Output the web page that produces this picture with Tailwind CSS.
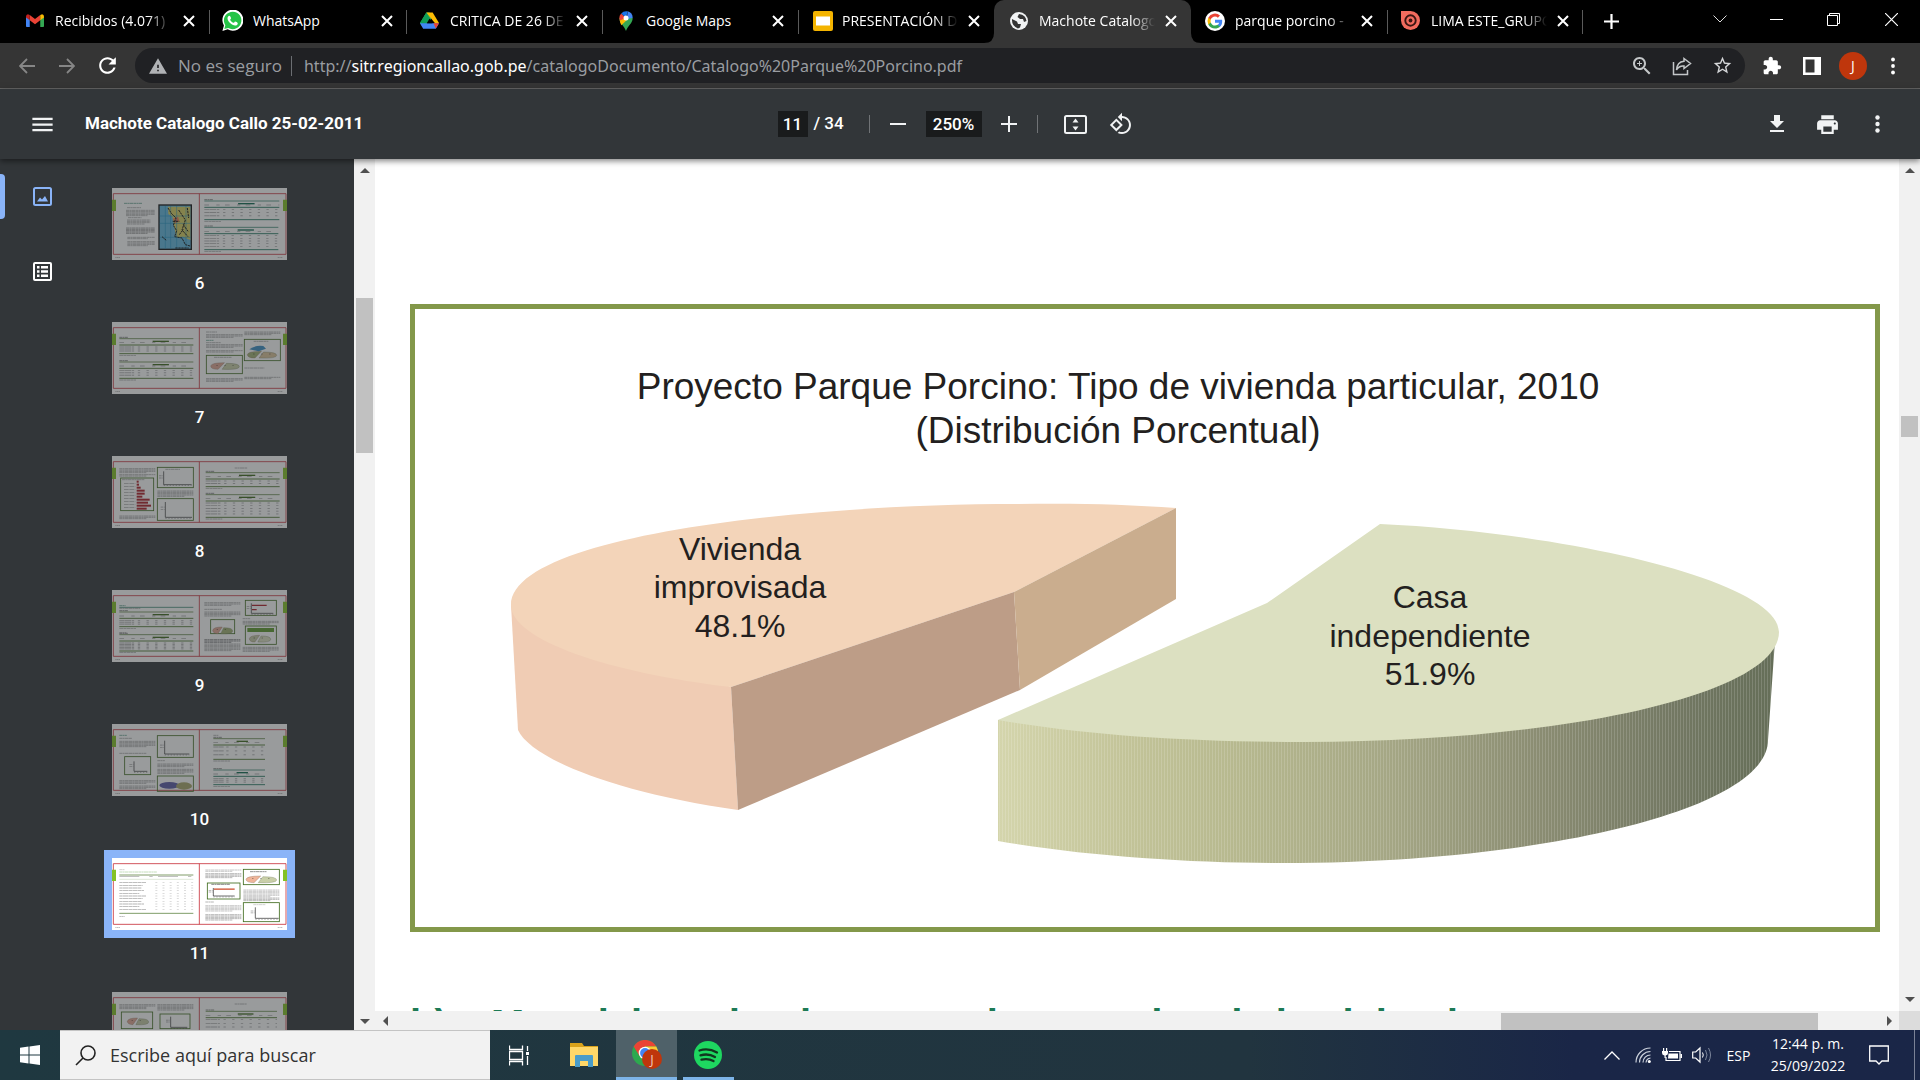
<!DOCTYPE html>
<html lang="es">
<head>
<meta charset="utf-8">
<title>Machote Catalogo Callo 25-02-2011</title>
<script src="https://cdn.jsdelivr.net/npm/@tailwindcss/browser@4"></script>
</head>
<body class="flex h-screen flex-col overflow-hidden bg-black font-['Open_Sans','Noto_Sans',sans-serif] text-white">

<!-- Tab strip -->
<header class="flex h-[43px] shrink-0 items-stretch bg-black text-[14px]">
  <nav class="flex pl-[14px]" aria-label="Pestañas">
    <div class="flex w-[196px] items-center border-r border-transparent pb-[2px] pl-3">
      <svg class="size-[18px] shrink-0" viewBox="0 0 24 24"><path fill="#4285f4" d="M1 20h4V10L0 6v12.500Q0 20 1 20z"/><path fill="#34a853" d="M19 20h4q1-.2 1-1.500V6l-5 4z"/><path fill="#ea4335" d="M5 11V4l7 5.300L19 4v7l-7 5.300z"/><path fill="#c5221f" d="M0 6q0-2.500 2.500-3L5 4v7L0 7.300z"/><path fill="#fbbc04" d="M24 6q0-2.500-2.500-3L19 4v7l5-3.700z"/></svg>
      <a href="#" class="ml-[11px] w-[116px] overflow-hidden whitespace-nowrap [mask-image:linear-gradient(to_right,black_80%,transparent)]">Recibidos (4.071)</a>
      <button class="ml-[12px]" aria-label="Cerrar"><svg class="size-3" viewBox="0 0 12 12"><path d="M1 1l10 10M11 1L1 11" stroke="#fff" stroke-width="2"/></svg></button>
    </div>
    <div class="relative flex w-[196px] items-center pb-[2px] pl-3">
      <span class="absolute left-[-1px] top-[10px] h-6 w-px bg-[#5a5a5a]"></span>
      <svg class="size-[21px] shrink-0" viewBox="0 0 24 24"><path fill="#fff" d="M.5 24l1.700-6.200A12 12 0 1 1 6.500 22z"/><path fill="#25c447" d="M2.600 21.700l1.200-4.300a10 10 0 1 1 3.400 3.200z"/><path fill="#fff" d="M8.200 6.500c-.5 0-1.900 1-1.900 3 0 3.500 5 8.300 8.700 8.300 1.700 0 3-1.200 3-2.800 0-.6-2.600-2-3.100-1.800-.5.300-1 1.500-1.500 1.500-1 0-3.900-2.600-4-3.700 0-.6 1-1 1-1.600S9.300 6.500 8.200 6.500z"/></svg>
      <a href="#" class="ml-[10px] w-[116px] overflow-hidden whitespace-nowrap">WhatsApp</a>
      <button class="ml-[12px]" aria-label="Cerrar"><svg class="size-3" viewBox="0 0 12 12"><path d="M1 1l10 10M11 1L1 11" stroke="#fff" stroke-width="2"/></svg></button>
    </div>
    <div class="relative flex w-[196px] items-center pb-[2px] pl-[14px]">
      <span class="absolute left-0 top-[10px] h-6 w-px bg-[#5a5a5a]"></span>
      <svg class="size-[19px] shrink-0" viewBox="0 0 24 24"><path fill="#34a853" d="M8 2h4L15.500 8 4.500 21.500 0 15z"/><path fill="#fbbc04" d="M8 2h8l8 13-4.500 1-7.500-9z"/><path fill="#0f9d58" d="M8 2l4 7-7.500 12.500L0 15z"/><path fill="#4285f4" d="M0 15.500h24L20 22.500H4z"/><path fill="#ea4335" d="M17 15.500h7L20 22z"/><path fill="#000" d="M12 9.500l3.500 6h-7z"/></svg>
      <a href="#" class="ml-[11px] w-[116px] overflow-hidden whitespace-nowrap [mask-image:linear-gradient(to_right,black_80%,transparent)]">CRITICA DE 26 DE</a>
      <button class="ml-[10px]" aria-label="Cerrar"><svg class="size-3" viewBox="0 0 12 12"><path d="M1 1l10 10M11 1L1 11" stroke="#fff" stroke-width="2"/></svg></button>
    </div>
    <div class="relative flex w-[196px] items-center pb-[2px] pl-[14px]">
      <span class="absolute left-0 top-[10px] h-6 w-px bg-[#5a5a5a]"></span>
      <svg class="size-[20px] shrink-0" viewBox="0 0 24 24"><path fill="#34a853" d="M12 24C10 18 4 15 4 8.500h16C20 15 14 18 12 24z"/><path fill="#fbbc04" d="M4.500 11.500L10 6l4 4-7.500 7q-1.500-2-2-5.500z"/><path fill="#ea4335" d="M4 8.500Q4 5 6.300 3L12 8.500l-7.500 3z"/><path fill="#1a73e8" d="M6.300 3Q9-.5 14 .4L12 8.500z"/><path fill="#4285f4" d="M14 .4Q20 2 20 8.500l-7 1z"/><circle cx="12" cy="8.300" r="3" fill="#fff"/></svg>
      <a href="#" class="ml-[10px] w-[116px] overflow-hidden whitespace-nowrap">Google Maps</a>
      <button class="ml-[10px]" aria-label="Cerrar"><svg class="size-3" viewBox="0 0 12 12"><path d="M1 1l10 10M11 1L1 11" stroke="#fff" stroke-width="2"/></svg></button>
    </div>
    <div class="relative flex w-[196px] items-center pb-[2px] pl-[15px]">
      <span class="absolute left-0 top-[10px] h-6 w-px bg-[#5a5a5a]"></span>
      <svg class="size-[20px] shrink-0" viewBox="0 0 20 20"><rect width="20" height="20" rx="2" fill="#f4b400"/><rect x="3" y="5.500" width="14" height="9" fill="#fff"/></svg>
      <a href="#" class="ml-[9px] w-[116px] overflow-hidden whitespace-nowrap [mask-image:linear-gradient(to_right,black_80%,transparent)]">PRESENTACIÓN DE</a>
      <button class="ml-[10px]" aria-label="Cerrar"><svg class="size-3" viewBox="0 0 12 12"><path d="M1 1l10 10M11 1L1 11" stroke="#fff" stroke-width="2"/></svg></button>
    </div>
    <div class="relative flex w-[197px] items-center rounded-t-[10px] bg-[#353535] pb-[2px] pl-4">
      <svg class="absolute bottom-0 left-[-10px] size-[10px]" viewBox="0 0 10 10"><path fill="#353535" d="M10 0v10H0Q10 10 10 0z"/></svg>
      <svg class="absolute bottom-0 right-[-10px] size-[10px]" viewBox="0 0 10 10"><path fill="#353535" d="M0 0v10h10Q0 10 0 0z"/></svg>
      <svg class="size-[18px] shrink-0" viewBox="0 0 18 18"><circle cx="9" cy="9" r="9" fill="#f1f3f4"/><path d="M2 7l5 2.500 1 2.500 3 0-1 3.500-2 1Q1.500 14 2 7zM9 2l-1.500 3 2.500 2h3l1 3 2.500-1Q16 3 9 2z" fill="#353535"/></svg>
      <a href="#" class="ml-[11px] w-[116px] overflow-hidden whitespace-nowrap [mask-image:linear-gradient(to_right,black_80%,transparent)]">Machote Catalogo</a>
      <button class="ml-[10px]" aria-label="Cerrar"><svg class="size-3" viewBox="0 0 12 12"><path d="M1 1l10 10M11 1L1 11" stroke="#fff" stroke-width="2"/></svg></button>
    </div>
    <div class="flex w-[196px] items-center pb-[2px] pl-[14px]">
      <svg class="size-[20px] shrink-0" viewBox="0 0 24 24"><circle cx="12" cy="12" r="12" fill="#fff"/><g transform="translate(3 3) scale(.75)"><path fill="#4285f4" d="M23.500 12.300c0-.9-.1-1.500-.2-2.300H12v4.600h6.600c-.3 1.500-1.200 2.800-2.500 3.700v3h3.900c2.300-2.100 3.500-5.200 3.500-9z"/><path fill="#34a853" d="M12 24c3.200 0 6-1.100 8-2.900l-3.900-3c-1.100.7-2.500 1.200-4.100 1.200-3.100 0-5.800-2.100-6.700-5H1.300v3.100C3.300 21.300 7.300 24 12 24z"/><path fill="#fbbc05" d="M5.300 14.300a7 7 0 0 1 0-4.600V6.600h-4a12 12 0 0 0 0 10.800z"/><path fill="#ea4335" d="M12 4.800c1.800 0 3.300.6 4.600 1.800L20 3.200A12 12 0 0 0 1.300 6.600l4 3.100c.9-2.800 3.600-4.900 6.700-4.900z"/></g></svg>
      <a href="#" class="ml-[10px] w-[116px] overflow-hidden whitespace-nowrap [mask-image:linear-gradient(to_right,black_80%,transparent)]">parque porcino -</a>
      <button class="ml-[10px]" aria-label="Cerrar"><svg class="size-3" viewBox="0 0 12 12"><path d="M1 1l10 10M11 1L1 11" stroke="#fff" stroke-width="2"/></svg></button>
    </div>
    <div class="relative flex w-[197px] items-center border-r border-transparent pb-[2px] pl-[14px]">
      <span class="absolute left-0 top-[10px] h-6 w-px bg-[#5a5a5a]"></span>
      <span class="absolute right-0 top-[10px] h-6 w-px bg-[#5a5a5a]"></span>
      <svg class="size-[19px] shrink-0" viewBox="0 0 20 20"><path fill="#f26b5e" d="M0 0h10a10 10 0 1 1-10 10z"/><circle cx="10" cy="10" r="5.500" fill="none" stroke="#3a1512" stroke-width="2"/><circle cx="10" cy="10" r="2" fill="#3a1512"/></svg>
      <a href="#" class="ml-[11px] w-[116px] overflow-hidden whitespace-nowrap [mask-image:linear-gradient(to_right,black_80%,transparent)]">LIMA ESTE_GRUPO</a>
      <button class="ml-[10px]" aria-label="Cerrar"><svg class="size-3" viewBox="0 0 12 12"><path d="M1 1l10 10M11 1L1 11" stroke="#fff" stroke-width="2"/></svg></button>
    </div>
  </nav>
  <button class="grid w-[54px] place-items-center" aria-label="Nueva pestaña"><svg class="size-[15px]" viewBox="0 0 15 15"><path d="M7.500 0v15M0 7.500h15" stroke="#fff" stroke-width="2.200"/></svg></button>
  <div class="ml-auto flex h-[38px] items-stretch">
    <button class="grid w-[57px] place-items-center" aria-label="Buscar pestañas"><svg class="h-2 w-[14px]" viewBox="0 0 14 8"><path d="M.5.5L7 7l6.500-6.500" fill="none" stroke="#ddd"/></svg></button>
    <button class="grid w-[57px] place-items-center" aria-label="Minimizar"><svg class="h-px w-[13px]" viewBox="0 0 13 1"><path fill="#fff" d="M0 0h13v1H0z"/></svg></button>
    <button class="grid w-[57px] place-items-center" aria-label="Restaurar"><svg class="size-[13px]" viewBox="0 0 13 13"><path d="M.5 2.500h10v10h-10zM2.500 2.500v-2h10v10h-2" fill="none" stroke="#fff"/></svg></button>
    <button class="grid w-[58px] place-items-center" aria-label="Cerrar ventana"><svg class="size-[13px]" viewBox="0 0 13 13"><path d="M0 0l13 13M13 0L0 13" stroke="#fff" stroke-width="1.200"/></svg></button>
  </div>
</header>

<!-- Address bar -->
<div class="flex h-[46px] shrink-0 items-center border-b border-[#666] bg-[#353535] pl-[7px] pr-2">
  <button class="grid w-10 place-items-center" aria-label="Atrás"><svg class="size-4" viewBox="0 0 16 16"><path d="M16 8H1.500M8 1L1 8l7 7" fill="none" stroke="#868686" stroke-width="1.800"/></svg></button>
  <button class="grid w-10 place-items-center" aria-label="Adelante"><svg class="size-4" viewBox="0 0 16 16"><path d="M0 8h14.500M8 1l7 7-7 7" fill="none" stroke="#868686" stroke-width="1.800"/></svg></button>
  <button class="grid w-10 place-items-center" aria-label="Recargar"><svg class="size-[25px]" viewBox="0 0 24 24"><path fill="#fff" d="M17.650 6.350C16.200 4.900 14.210 4 12 4c-4.420 0-7.990 3.580-7.990 8s3.570 8 7.990 8c3.730 0 6.840-2.550 7.730-6h-2.080c-.82 2.330-3.040 4-5.650 4-3.310 0-6-2.690-6-6s2.690-6 6-6c1.660 0 3.140.69 4.220 1.780L13 11h7V4l-2.350 2.350z"/></svg></button>
  <div class="ml-2 flex h-[35px] flex-1 items-center rounded-full bg-[#202124] pl-[14px] pr-[3px] text-[17px] text-[#9a9da1]">
    <svg class="size-[18px] shrink-0" viewBox="1 1 22 21"><path fill="#b0b2b5" d="M1 21h22L12 2 1 21zm12-3h-2v-2h2v2zm0-4h-2v-4h2v4z"/></svg>
    <span class="ml-[11px] whitespace-nowrap">No es seguro</span>
    <span class="ml-[9px] h-5 w-px bg-[#6b6e72]"></span>
    <div role="textbox" aria-label="Dirección" tabindex="0" class="ml-3 flex-1 whitespace-nowrap font-['Noto_Sans',sans-serif] text-[16px]">http://<span class="text-white">sitr.regioncallao.gob.pe</span>/catalogoDocumento/Catalogo%20Parque%20Porcino.pdf</div>
    <button class="grid w-10 place-items-center" aria-label="Zoom"><svg class="size-[24px]" viewBox="0 0 24 24"><path fill="#c4c7c9" d="M15.500 14h-.79l-.28-.27C15.410 12.590 16 11.110 16 9.500 16 5.910 13.090 3 9.500 3S3 5.910 3 9.500 5.910 16 9.500 16c1.610 0 3.090-.59 4.230-1.570l.27.28v.79l5 4.990L20.490 19l-4.990-5zm-6 0C7.010 14 5 11.990 5 9.500S7.010 5 9.500 5 14 7.010 14 9.500 11.990 14 9.500 14zm2.500-4h-2v2H9v-2H7V9h2V7h1v2h2v1z"/></svg></button>
    <button class="grid w-10 place-items-center" aria-label="Compartir"><svg class="size-[20px]" viewBox="0 0 20 20"><path d="M1.500 6v12.500h14V14M12 2.500l6.500 5-6.500 5V10Q7 9.500 4.500 14 5 6 12 5.300z" fill="none" stroke="#c4c7c9" stroke-width="1.500"/></svg></button>
    <button class="grid w-10 place-items-center" aria-label="Favorito"><svg class="size-[21px]" viewBox="0 0 24 24"><path fill="#d5d7d9" d="M22 9.240l-7.190-.62L12 2 9.190 8.630 2 9.240l5.460 4.730L5.820 21 12 17.270 18.180 21l-1.630-7.030L22 9.240zM12 15.400l-3.760 2.270 1-4.280-3.320-2.880 4.380-.38L12 6.100l1.710 4.040 4.380.38-3.320 2.880 1 4.280L12 15.400z"/></svg></button>
  </div>
  <button class="ml-[7px] grid w-10 place-items-center" aria-label="Extensiones"><svg class="size-[20px]" viewBox="0 0 24 24"><path fill="#fff" d="M20.500 11H19V7c0-1.100-.9-2-2-2h-4V3.500C13 2.120 11.880 1 10.500 1S8 2.120 8 3.500V5H4c-1.100 0-1.990.9-1.990 2v3.800H3.500c1.490 0 2.700 1.210 2.700 2.700s-1.210 2.700-2.700 2.700H2V20c0 1.100.9 2 2 2h3.800v-1.500c0-1.490 1.210-2.700 2.700-2.700 1.490 0 2.700 1.210 2.700 2.700V22H17c1.100 0 2-.9 2-2v-4h1.500c1.380 0 2.500-1.120 2.500-2.500S21.880 11 20.500 11z"/></svg></button>
  <button class="grid w-10 place-items-center" aria-label="Panel lateral"><svg class="size-[18px]" viewBox="0 0 18 18"><path fill="#fff" fill-rule="evenodd" d="M0 0h18v18H0zM2.500 2.500v13h9v-13z"/></svg></button>
  <button class="grid w-[42px] place-items-center" aria-label="Perfil"><span class="grid size-7 place-items-center rounded-full bg-[#bf360c] text-[14px] leading-none">J</span></button>
  <button class="grid w-[38px] place-items-center" aria-label="Menú"><svg class="h-[18px] w-1" viewBox="0 0 4 18"><g fill="#fff"><circle cx="2" cy="2.500" r="1.900"/><circle cx="2" cy="9" r="1.900"/><circle cx="2" cy="15.500" r="1.900"/></g></svg></button>
</div>

<!-- PDF toolbar -->
<div class="relative z-10 flex h-[70px] shrink-0 items-center bg-[#323639] font-['Roboto',sans-serif] text-[17px] font-medium shadow-[0_2px_6px_rgba(0,0,0,0.5)]">
  <div class="flex flex-1 items-center pl-[29px]">
    <button aria-label="Menú lateral"><svg class="size-[27px]" viewBox="0 0 24 24"><path fill="#f1f3f4" d="M3 18h18v-2H3v2zm0-5h18v-2H3v2zm0-7v2h18V6H3z"/></svg></button>
    <h1 class="ml-[29px] whitespace-nowrap font-bold">Machote Catalogo Callo 25-02-2011</h1>
  </div>
  <div class="flex items-center pr-[17px]">
    <input aria-label="Página" value="11" class="h-[26px] w-[30px] bg-[#191b1c] text-center text-[17px]">
    <span class="ml-[6px] w-[31px] whitespace-nowrap text-[17px]">/ 34</span>
    <span class="ml-6 h-[18px] w-px bg-[#707376]"></span>
    <button class="ml-[12px] grid size-8 place-items-center" aria-label="Alejar"><svg class="h-[2px] w-4" viewBox="0 0 16 2"><path fill="#f1f3f4" d="M0 0h16v2H0z"/></svg></button>
    <input aria-label="Nivel de zoom" value="250%" class="ml-3 h-[26px] w-14 bg-[#191b1c] text-center text-[17px]">
    <button class="ml-[11px] grid size-8 place-items-center" aria-label="Acercar"><svg class="size-4" viewBox="0 0 16 16"><path stroke="#f1f3f4" stroke-width="2" d="M8 0v16M0 8h16"/></svg></button>
    <span class="ml-3 h-[18px] w-px bg-[#707376]"></span>
    <button class="ml-[22px] grid size-8 place-items-center" aria-label="Ajustar a la página"><svg class="h-[19px] w-[23px]" viewBox="0 0 23 19"><rect x="1" y="1" width="21" height="17" rx="1.500" fill="none" stroke="#f1f3f4" stroke-width="2"/><path fill="#f1f3f4" d="M11.500 3.500l3 4h-6zM11.500 15.500l3-4h-6z"/></svg></button>
    <button class="ml-[13px] grid size-8 place-items-center" aria-label="Girar"><svg class="size-[24px]" viewBox="0 0 24 24"><path fill="#f1f3f4" d="M7.340 6.410L.86 12.900l6.490 6.480 6.490-6.480-6.500-6.490zM3.690 12.900l3.660-3.660L11 12.900l-3.660 3.660-3.650-3.660zm15.670-6.260C17.610 4.880 15.300 4 13 4V.76L8.760 5 13 9.240V6c1.790 0 3.580.68 4.950 2.050 2.730 2.730 2.730 7.170 0 9.900C16.580 19.320 14.790 20 13 20c-.97 0-1.940-.21-2.840-.61l-1.490 1.490C10.020 21.620 11.510 22 13 22c2.300 0 4.610-.88 6.360-2.640 3.520-3.510 3.520-9.210 0-12.720z"/></svg></button>
  </div>
  <div class="flex flex-1 justify-end pr-[18px]">
    <button class="grid w-[50px] place-items-center" aria-label="Descargar"><svg class="size-6" viewBox="0 0 24 24"><path fill="#f1f3f4" d="M19 9h-4V3H9v6H5l7 7 7-7zM5 18v2h14v-2H5z"/></svg></button>
    <button class="grid w-[50px] place-items-center" aria-label="Imprimir"><svg class="size-[25px]" viewBox="0 0 24 24"><path fill="#f1f3f4" d="M19 8H5c-1.660 0-3 1.340-3 3v6h4v4h12v-4h4v-6c0-1.660-1.340-3-3-3zm-3 11H8v-5h8v5zm3-7c-.55 0-1-.45-1-1s.45-1 1-1 1 .45 1 1-.45 1-1 1zm-1-9H6v4h12V3z"/></svg></button>
    <button class="grid w-[50px] place-items-center" aria-label="Más acciones"><svg class="h-[18px] w-[5px]" viewBox="0 0 5 18"><g fill="#f1f3f4"><circle cx="2.500" cy="2.500" r="2.200"/><circle cx="2.500" cy="9" r="2.200"/><circle cx="2.500" cy="15.500" r="2.200"/></g></svg></button>
  </div>
</div>

<div class="flex min-h-0 flex-1">
  <!-- Sidebar -->
  <aside class="flex w-[375px] shrink-0 overflow-hidden bg-[#323639]">
    <nav class="flex w-[84px] flex-col gap-[30px] pt-[15px]" aria-label="Vistas">
      <button class="relative flex h-[45px] items-center justify-center" aria-label="Miniaturas">
        <span class="absolute left-0 top-0 h-full w-[5px] rounded-r bg-[#8ab4f8]"></span>
        <svg class="size-[19px]" viewBox="0 0 19 19"><rect x="1" y="1" width="17" height="17" rx="1.500" fill="none" stroke="#8ab4f8" stroke-width="2"/><path fill="#8ab4f8" d="M4 14.500l3-4 2 2 3-3.500 3 5.500z"/></svg>
      </button>
      <button class="flex h-[45px] items-center justify-center" aria-label="Esquema">
        <svg class="size-[19px]" viewBox="0 0 19 19"><rect x="1" y="1" width="17" height="17" rx="1" fill="none" stroke="#fff" stroke-width="2"/><path fill="#fff" d="M4 4h2.500v2.500H4zM8 4h7v2.500H8zM4 8.300h2.500v2.500H4zM8 8.300h7v2.500H8zM4 12.500h2.500V15H4zM8 12.500h7V15H8z"/></svg>
      </button>
    </nav>
    <ol id="thumbs" class="ml-7 w-[175px] pt-[29px] font-['Roboto',sans-serif] text-[17px] font-medium"></ol>
    <div class="ml-auto flex w-[21px] flex-col items-center bg-[#f1f1f1] pb-[6px] pt-[9px]">
      <svg class="h-[5px] w-[10px]" viewBox="0 0 10 5"><path fill="#505050" d="M0 5l5-5 5 5z"/></svg>
      <span class="mt-[125px] h-[155px] w-[17px] bg-[#c1c1c1]"></span>
      <svg class="mt-auto h-[5px] w-[10px]" viewBox="0 0 10 5"><path fill="#505050" d="M0 0h10L5 5z"/></svg>
    </div>
  </aside>

  <!-- Document -->
  <div class="flex min-w-0 flex-1 flex-col bg-white">
    <main class="min-h-0 flex-1 overflow-hidden pl-[35px] pr-[19px] pt-[145px] font-['Liberation_Sans',Arial,sans-serif] text-[#231f20]">
      <figure class="border-5 border-[#83984a] pt-14">
        <figcaption class="pr-[54px] text-center text-[37px] leading-[44px]">Proyecto Parque Porcino: Tipo de vivienda particular, 2010<br>(Distribución Porcentual)</figcaption>
        <svg class="block w-full" viewBox="415 453 1460 474" role="img" aria-label="Vivienda improvisada 48.1%, Casa independiente 51.9%">
          <defs>
            <linearGradient id="side" x1="998" x2="1775" y1="0" y2="0" gradientUnits="userSpaceOnUse">
              <stop offset="0" stop-color="#d4d5ac"/><stop offset=".17" stop-color="#c2c398"/><stop offset=".3" stop-color="#b7b98f"/><stop offset=".5" stop-color="#a5a785"/><stop offset=".7" stop-color="#8a8c72"/><stop offset=".87" stop-color="#737863"/><stop offset="1" stop-color="#656e58"/>
            </linearGradient>
            <pattern id="ribs" width="3" height="10" patternUnits="userSpaceOnUse"><path fill="#fff" fill-opacity=".15" d="M0 0h1v10H0z"/></pattern>
          </defs>
          <path fill="#f0ccb4" d="M511 605L518 730C530 757 610 792 738 810L731 687z"/>
          <path fill="#f3d4b9" d="M1176 508C1125 504 1070 503 1018 504C800 504 511 536 511 605C511 640 610 673 731 687L1014 592z"/>
          <path fill="#bd9d87" d="M731 687L1014 592L1020 690L738 810z"/>
          <path fill="#caad8e" d="M1014 592L1176 508V599L1020 690z"/>
          <path fill="url(#side)" d="M998 720V841C1085 856 1190 863 1283 863C1540 863 1768 810 1768 740L1775 640z"/>
          <path fill="url(#ribs)" d="M998 720V841C1085 856 1190 863 1283 863C1540 863 1768 810 1768 740L1775 640z"/>
          <path fill="#dce0c1" d="M998 720L1267 603L1380 524C1560 532 1779 580 1779 632C1779 695 1560 742 1304 742C1190 742 1085 735 998 720z"/>
          <g font-size="32" text-anchor="middle" fill="#231f20">
            <text x="740" y="560">Vivienda</text><text x="740" y="598">improvisada</text><text x="740" y="637">48.1%</text>
            <text x="1430" y="608">Casa</text><text x="1430" y="647">independiente</text><text x="1430" y="685">51.9%</text>
          </g>
        </svg>
      </figure>
      <h2 class="mt-[72px] flex whitespace-nowrap text-[40px] font-bold leading-none text-[#1d7a55]"><span class="w-[81px]">b)</span>Material predominante en las paredes de la vivienda</h2>
    </main>
    <div class="flex h-[19px] shrink-0 items-center bg-[#f1f1f1] pl-2 pr-[7px]">
      <svg class="h-[10px] w-[5px]" viewBox="0 0 5 10"><path fill="#505050" d="M5 0v10L0 5z"/></svg>
      <span class="ml-auto mt-[2px] h-[17px] w-[317px] bg-[#c1c1c1]"></span>
      <svg class="ml-[69px] h-[10px] w-[5px]" viewBox="0 0 5 10"><path fill="#505050" d="M0 0v10l5-5z"/></svg>
    </div>
  </div>
  <div class="flex w-[21px] shrink-0 flex-col bg-[#f1f1f1]">
    <div class="flex flex-1 flex-col items-center pb-[9px] pt-[9px]">
      <svg class="h-[5px] w-[10px]" viewBox="0 0 10 5"><path fill="#505050" d="M0 5l5-5 5 5z"/></svg>
      <span class="mt-[243px] h-[21px] w-[17px] bg-[#c1c1c1]"></span>
      <svg class="mt-auto h-[5px] w-[10px]" viewBox="0 0 10 5"><path fill="#505050" d="M0 0h10L5 5z"/></svg>
    </div>
    <div class="h-[19px] bg-[#dcdcdc]"></div>
  </div>
</div>

<!-- Taskbar -->
<footer class="flex h-[50px] shrink-0 items-stretch bg-linear-to-r from-[#1f3840] via-[#21343f] via-65% to-[#1a2647] to-82%">
  <button class="grid w-[60px] place-items-center" aria-label="Inicio"><svg class="size-5" viewBox="0 0 20 20"><path fill="#fff" d="M0 2.800L8.500 1.600v7.900H0zM9.500 1.400L20 0v9.500H9.500zM0 10.500h8.500v7.900L0 17.200zM9.500 10.500H20V20L9.500 18.600z"/></svg></button>
  <label class="flex w-[430px] items-center border-y border-[#c4c4c4] bg-[#f2f2f2] pl-[15px]">
    <svg class="size-[21px] shrink-0" viewBox="0 0 21 21"><circle cx="13" cy="8" r="7" fill="none" stroke="#222" stroke-width="1.600"/><path d="M8 13L1 20" stroke="#222" stroke-width="1.600"/></svg>
    <input type="text" placeholder="Escribe aquí para buscar" aria-label="Buscar" class="ml-[14px] w-full bg-transparent text-[18px] text-[#333] outline-none placeholder:text-[#333]">
  </label>
  <button class="grid w-[59px] place-items-center" aria-label="Vista de tareas"><svg class="size-[21px]" viewBox="0 0 21 21"><path d="M.5.500v4h13v-4M.5 6.500h13v8H.5zM.5 20.500v-4h13v4M18.500 1v5M18.500 11v9" fill="none" stroke="#fff" stroke-width="1.300"/><path fill="#fff" d="M17 7h3v3h-3z"/></svg></button>
  <button class="grid w-[67px] place-items-center pl-[2px]" aria-label="Explorador"><svg class="h-6 w-7" viewBox="0 0 28 24"><path fill="#d9a21b" d="M0 0h12l2 3h14v6H0z"/><path fill="#ffd768" d="M0 4h28v19H0z"/><path fill="#4a9cc9" d="M5 13q0-1 1-1h16q1 0 1 1v11h-5v-6h-8v6H5z"/></svg></button>
  <button class="grid w-[61px] place-items-center border-b-3 border-[#7db4e8] bg-[#4f6169] pt-1" aria-label="Chrome"><svg class="h-[31px] w-[31px]" viewBox="0 0 31 31"><circle cx="14" cy="13" r="13" fill="#2da94f"/><path fill="#ea4335" d="M2.700 6.500A13 13 0 0 1 25.300 6.500H14L8.500 16z"/><path fill="#fcc934" d="M25.300 6.500A13 13 0 0 1 14 26l5.500-10L14 6.500z"/><circle cx="14" cy="13" r="6.300" fill="#fff"/><circle cx="14" cy="13" r="4.900" fill="#4285f4"/><circle cx="21" cy="19" r="10" fill="#bf360c"/><text x="21" y="24" font-size="13" text-anchor="middle" fill="#f3c6b8">J</text></svg></button>
  <button class="ml-[6px] grid w-[51px] place-items-center border-b-3 border-[#7db4e8] pr-[2px] pt-[2px]" aria-label="Spotify"><svg class="size-7" viewBox="0 0 28 28"><circle cx="14" cy="14" r="14" fill="#1ed760"/><path d="M5.500 9.500q9-2.800 17.500 2M6.500 14.300q8-2.200 14.500 1.700M7.500 18.700q6.500-1.700 12 1.400" fill="none" stroke="#12351f" stroke-width="2.300" stroke-linecap="round"/></svg></button>
  <div class="ml-auto flex items-center">
    <button class="grid w-[34px] place-items-center" aria-label="Iconos ocultos"><svg class="h-[9px] w-4" viewBox="0 0 16 9"><path d="M.5 8.500L8 1l7.500 7.500" fill="none" stroke="#fff" stroke-width="1.300"/></svg></button>
    <button class="grid w-[28px] place-items-center" aria-label="Wi-Fi"><svg class="size-4" viewBox="0 0 16 16"><g fill="none" stroke="#cdd3dd" stroke-width="1.200"><path d="M1 15.500A14.500 14.500 0 0 1 15.500 1M4.500 15.500a11 11 0 0 1 11-11M8 15.500A7.500 7.500 0 0 1 15.500 8M11 15.500q.5-4 4.500-4.500"/></g><circle cx="14.300" cy="14.500" r="1.500" fill="#fff"/></svg></button>
    <button class="grid w-[29px] place-items-center" aria-label="Batería"><svg class="h-[15px] w-5" viewBox="0 0 20 15"><path d="M7 3.500h11v9H4V9" fill="none" stroke="#fff" stroke-width="1.200"/><path fill="#fff" d="M6.500 5.500H16v5H6zM18.500 6H20v4h-1.500zM0 3h6v2q0 2-2.300 2.500V10H2.500V7.500Q0 7 0 5zM1 0h1.200v3H1zM4 0h1.200v3H4z"/></svg></button>
    <button class="grid w-[31px] place-items-center" aria-label="Volumen"><svg class="size-5" viewBox="0 0 20 20"><path d="M.7 7h3L8 3v14l-4.300-4h-3z" fill="none" stroke="#fff" stroke-width="1.200"/><path d="M10.500 7.500q1.500 2.500 0 5" fill="none" stroke="#fff"/><path d="M13.500 5q3 5 0 10M16.500 3q4 7 0 14" fill="none" stroke="#7d879c"/></svg></button>
    <button class="w-[43px] text-center text-[14px]" aria-label="Idioma">ESP</button>
    <time class="w-24 text-center text-[14px] leading-[22px]">12:44 p. m.<br>25/09/2022</time>
    <button class="grid w-[46px] place-items-center" aria-label="Notificaciones"><svg class="size-5" viewBox="0 0 20 20"><path d="M.7 1h18.600v15H13l-3 3-3-3H.7z" fill="none" stroke="#fff" stroke-width="1.300"/></svg></button>
    <span class="ml-3 h-[50px] w-[6px] border-l border-[#7b8296]"></span>
  </div>
</footer>

<script>
// Thumbnail sketches, drawn on a 525 x 216 grid per page.
const G = '#3f6b1c', TEAL = '#0f6b50', K = '#444';
const hl = (x, y, w, c = G, t = 2) => `<path d="M${x} ${y}h${w}" stroke="${c}" stroke-width="${t}"/>`;
const dash = (x, y, w, p, c = K) => `<path d="M${x} ${y}h${w}" stroke="${c}" stroke-width="1.500" stroke-dasharray="${p}" opacity=".8"/>`;
const para = (x, y, w, n, c = '#777') => Array.from({length: n}, (_, i) => `<path d="M${x} ${y + i * 4}h${i === n - 1 ? w * .75 : w}" stroke="${c}" stroke-width="1.600" stroke-dasharray="9 1 5 1 12 1"/>`).join('');
const box = (x, y, w, h, c = G) => `<rect x="${x}" y="${y}" width="${w}" height="${h}" fill="none" stroke="${c}" stroke-width="2.500"/>`;
const table = (x, y, w, h, n, c = G) => {
  let s = para(x, y - 4, 34, 1, '#333') + hl(x, y, w, c) + hl(x, y + 19, w, c, 2.500) + hl(x, y + h, w, c, 2.500) + hl(x + w * .45, y + 8, w * .22, c, 4) + dash(x, y + 12, w, '14 22 10 16', K);
  for (let i = 0; i < n; i++) { const r = y + 25 + i * (h - 27) / n; s += dash(x, r, w * .2, '14 1 20 2') + dash(x + w * .25, r, w * .75, '7 19'); }
  return s + dash(x, y + h + 5, 50, '12 1 8 1');
};
const pie = (x, y, w, a, b) => `<path d="M${x} ${y + 8}q2-10 ${w * .48}-10l-${w * .22} 20q-${w * .25} 0-${w * .26}-10z" fill="${a}" stroke="#8a6a55"/><path d="M${x + w * .55} ${y}q${w * .45} 0 ${w * .45} 10t-${w * .6} 8z" fill="${b}" stroke="#6b7350"/>` + dash(x + w * .2, y + 6, w * .7, '4 20', '#000');
const axes = (x, y, w, h) => `<path d="M${x} ${y}v${h}h${w}" fill="none" stroke="#222" stroke-width="2"/>` + dash(x - 14, y + h / 2, 12, '8 2') + dash(x - 14, y + h / 3, 12, '8 2') + dash(x, y + h + 3, w, '4 5');
const bars = [6, 7, 12, 24, 24, 17, 39, 34, 43, 30].map((w, i) => `<path d="M74 ${74 + i * 9}h${w}v6H74z" fill="#b02028"/>`).join('');
const pages = {
  6: para(36, 46, 72, 1, TEAL) + para(45, 59, 56, 1) + para(42, 67, 86, 5) + para(48, 89, 54, 1) + para(45, 96, 70, 4) + para(42, 120, 86, 5, '#555') + para(46, 148, 82, 2) + para(46, 161, 82, 4) + `<rect x="141" y="51" width="97" height="133" fill="#62b8de" stroke="#111" stroke-width="4"/><path d="M168 56h67v100l-22-10-20 2-12-62-12-8z" fill="#d8cf62"/><path d="M182 92l16-6 4 14-12 6z" fill="#f27b4f"/><path d="M160 54v128M176 54v128M194 54v128M222 54v128M143 84h93M143 106h93M143 148h93" stroke="#1a8fc0" stroke-width="1.500"/><path d="M168 60l10 16 14 14-8 22 10 16-6 18 22 4 10 20 14 4M200 66l20 30-10 30 18 20M150 146l14 12M226 60l4 30M190 180h40M182 100h20M214 110l14 20M202 140l12-16" fill="none" stroke="#111" stroke-width="3" stroke-dasharray="7 2"/>` + table(277, 39, 225, 56, 3, TEAL) + table(277, 118, 222, 67, 5, TEAL),
  7: table(22, 50, 222, 45, 3) + table(22, 120, 222, 49, 3) + para(282, 30, 44, 1) + para(282, 38, 110, 3) + para(282, 55, 30, 1, TEAL) + para(282, 62, 60, 1) + para(282, 68, 110, 3) + para(282, 86, 110, 2) + box(283, 100, 108, 55) + para(306, 106, 70, 1) + pie(296, 124, 86, '#e2a793', '#c9cfa8') + para(282, 170, 110, 3) + para(397, 30, 108, 3) + box(397, 52, 108, 64) + para(425, 58, 60, 1) + pie(406, 90, 88, '#a3b373', '#dcc39a') + '<path d="M412 82q20-14 42-10l8 8-22 8z" fill="#3a8fc4"/>' + para(397, 138, 80, 1) + para(397, 166, 108, 2),
  8: para(22, 38, 108, 4) + para(22, 56, 108, 2) + box(26, 66, 99, 98) + para(30, 71, 90, 1) + Array.from({length: 9}, (_, i) => dash(36, 82 + i * 9, 34, '14 2')).join('') + bars + para(22, 180, 108, 3) + box(136, 34, 108, 61) + para(160, 40, 60, 1) + axes(155, 46, 84, 40) + para(136, 105, 108, 5) + box(136, 128, 108, 65) + axes(160, 138, 80, 46) + para(368, 36, 50, 1) + table(281, 50, 222, 42, 2) + table(281, 116, 222, 68, 5),
  9: para(22, 47, 25, 1, TEAL) + hl(22, 52, 222, TEAL) + para(22, 55, 84, 1) + table(22, 66, 222, 44, 3) + para(22, 128, 28, 1) + table(22, 134, 222, 49, 5) + para(277, 38, 108, 3) + para(277, 58, 70, 1) + para(277, 66, 108, 4) + box(296, 89, 72, 42) + pie(302, 113, 60, '#e2a793', '#a3b373') + para(277, 149, 108, 3, '#333') + para(277, 162, 108, 6) + box(400, 31, 93, 45) + '<path d="M420 44h44v4h-44zM420 57h14v4h-14z" fill="#b02028"/>' + axes(418, 40, 66, 30) + para(392, 86, 30, 1) + para(392, 94, 108, 3) + box(400, 108, 93, 55) + '<path d="M406 114h80v12h-80z" fill="#5f9a2e"/>' + pie(412, 138, 64, '#c5caa5', '#dce0c1') + para(392, 172, 108, 4),
  10: para(22, 34, 30, 1, TEAL) + para(22, 43, 50, 1) + para(22, 52, 108, 5) + para(22, 88, 108, 1) + box(38, 98, 78, 54) + axes(66, 112, 40, 30) + para(22, 170, 108, 3) + para(22, 186, 108, 3) + box(136, 35, 108, 65) + axes(158, 50, 74, 40) + para(136, 110, 30, 1) + para(136, 120, 108, 3) + para(136, 136, 108, 4) + box(136, 156, 108, 46) + '<ellipse cx="172" cy="184" rx="30" ry="10" fill="#5b5aa6"/><ellipse cx="216" cy="186" rx="24" ry="11" fill="#a8a66a"/>' + para(304, 34, 20, 1) + table(304, 44, 155, 62, 3) + table(304, 138, 155, 44, 3, TEAL),
  11: para(22, 35, 22, 1, '#aaa') + para(22, 42, 150, 1, '#8fc07e') + hl(22, 51, 222) + dash(22, 55, 222, '60 30 10 16') + hl(22, 64, 222, '#9cb88a', 1) + Array.from({length: 11}, (_, i) => dash(22, 74 + i * 8, [80, 70, 66, 74, 60][i % 5], '10 1 16 1') + dash(130, 74 + i * 8, 114, '6 15.500', '#999')).join('') + hl(22, 166, 222) + dash(22, 176, 16, '5 1') + para(280, 36, 108, 2, '#999') + para(280, 47, 108, 4) + box(286, 75, 98, 48) + para(298, 79, 74, 1, '#222') + '<path d="M306 91h62v5h-62z" fill="#d8755c"/>' + axes(304, 90, 64, 24) + para(280, 132, 34, 1) + para(280, 143, 108, 5, '#999') + para(280, 170, 108, 5) + box(394, 34, 108, 46) + para(414, 41, 66, 1, '#333') + pie(402, 56, 92, '#f0b59a', '#c9cfa8') + para(394, 96, 108, 6, '#999') + para(394, 120, 108, 3) + box(394, 134, 108, 57) + para(424, 140, 48, 1, '#aaa') + axes(430, 148, 70, 33),
  12: para(22, 38, 108, 3) + para(22, 50, 108, 1) + box(28, 60, 94, 50) + pie(46, 80, 64, '#e2a793', '#c5caa5') + para(136, 38, 108, 5) + box(144, 66, 90, 44) + axes(176, 74, 50, 32) + para(368, 36, 48, 1) + table(281, 58, 214, 60, 3)
};
document.getElementById('thumbs').innerHTML = Object.entries(pages).map(([n, art]) => {
  const on = n === '11';
  return `<li class="flex h-[134px] flex-col items-center"><a href="#" aria-label="Página ${n}" class="${on ? 'block bg-white outline-8 outline-[#8ab4f8]' : 'block bg-white opacity-50'}"><svg class="block h-[72px] w-[175px]" viewBox="0 0 525 216"><path d="M4 17h518v182H4zM262 17v182" fill="none" stroke="#c8323c" stroke-width="2.500"/><path fill="#84c225" d="M0 35h12v34H0zM513 35h12v34h-12z"/>${art}${dash(10, 209, 14, '4 1')}${dash(497, 209, 14, '4 1')}</svg></a><span class="mt-3 leading-[22px]">${n}</span></li>`;
}).join('');
</script>
</body>
</html>
